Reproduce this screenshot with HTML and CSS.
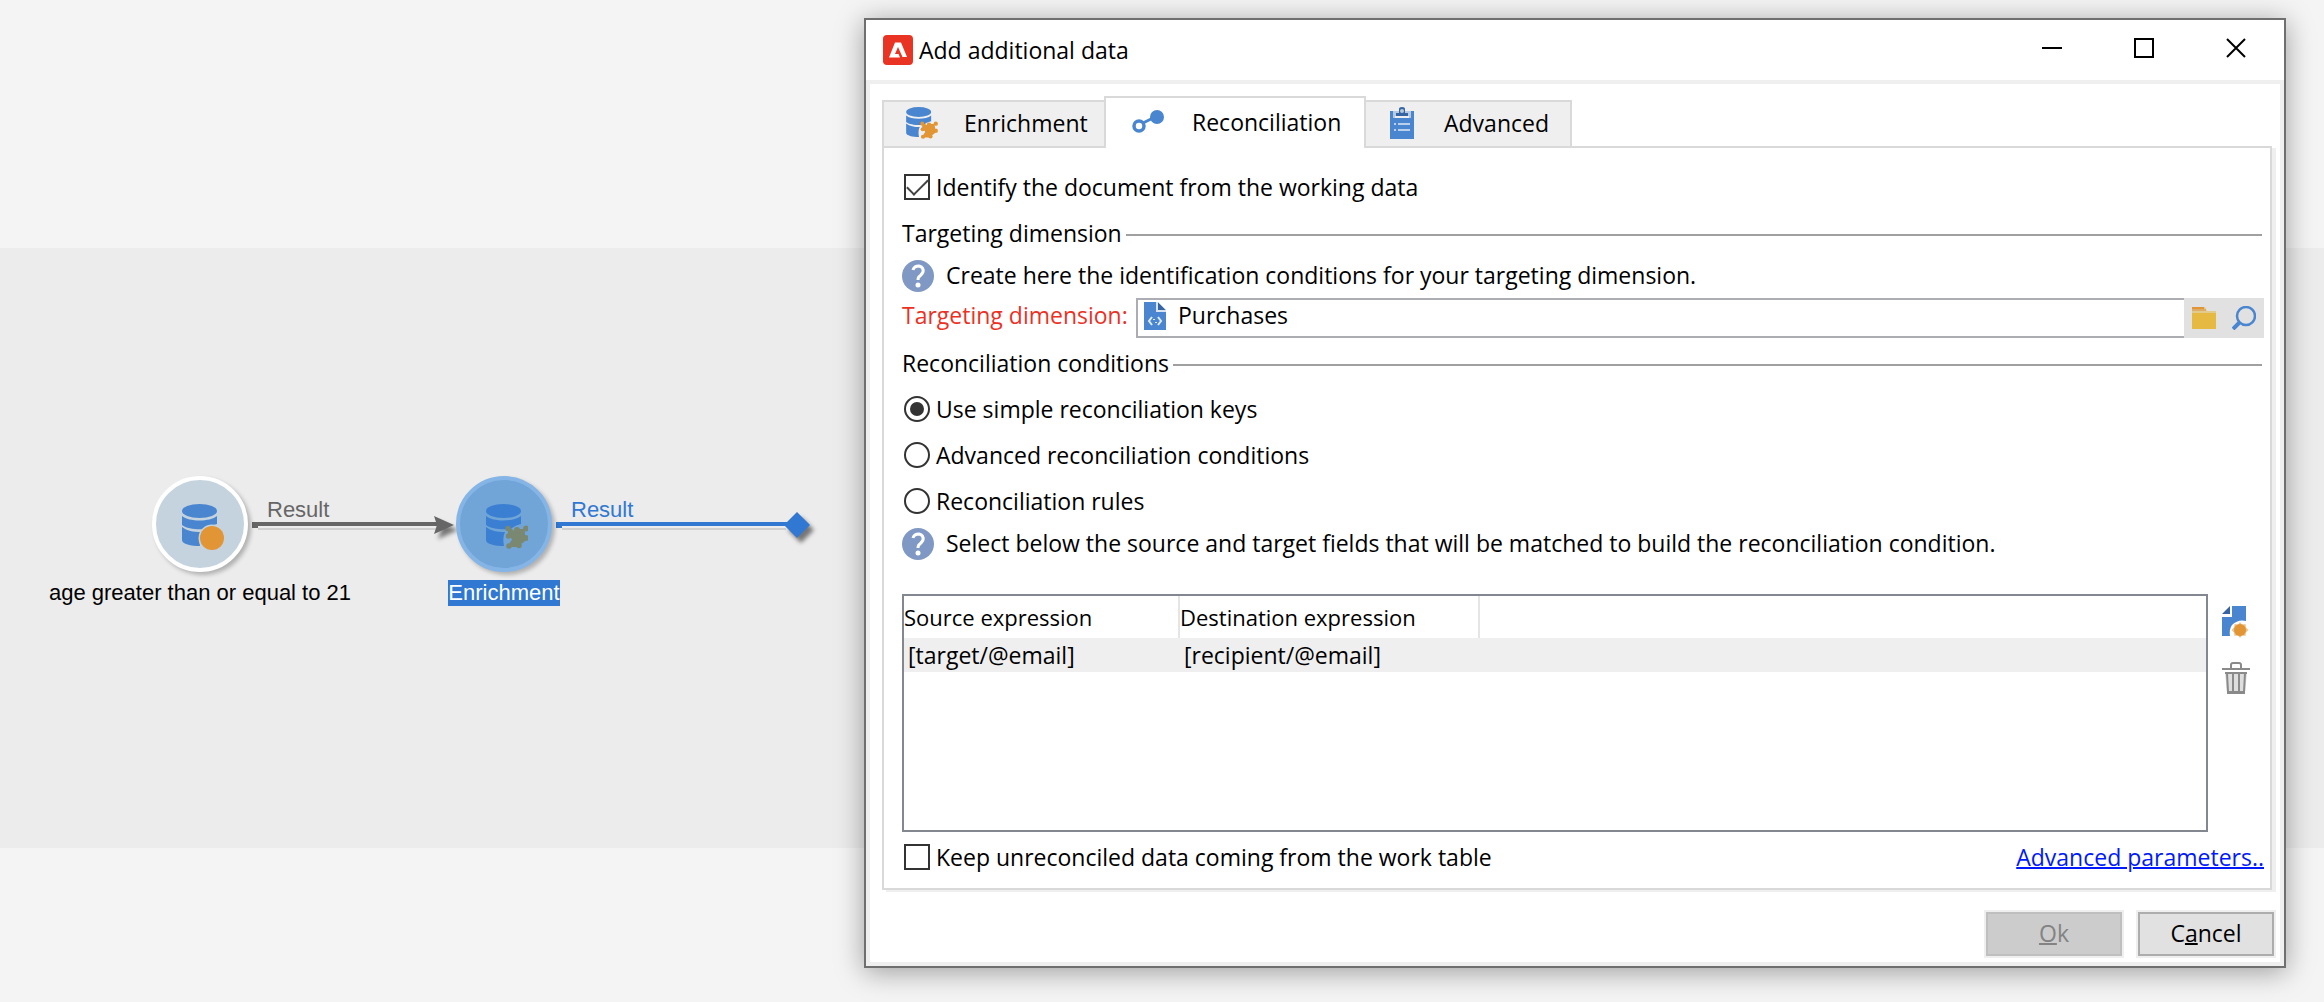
FILE: index.html
```html
<!DOCTYPE html>
<html lang="en">
<head>
<meta charset="utf-8">
<title>Add additional data</title>
<link rel="stylesheet" href="styles.css">
</head>
<body>
<svg class="defs" aria-hidden="true">
  <symbol id="database" viewBox="0 0 36 42">
    <ellipse cx="17.500" cy="7" rx="17.500" ry="7"/>
    <path d="M0 12c7 6 28 6 35 0v8c-5 1-8 3-10 5-9 1-20 0-25-4z"/>
    <path d="M0 23c5 4 11 5 19 5-2 4-2 9-1 14C9 42 0 40 0 36z"/>
  </symbol>
  <symbol id="puzzle" viewBox="0 0 24 24">
    <path d="M3 4h4q2 3 4 1l3-1h5l1 4v8q-2 2-4 3v3H4l1-5q3-2 1-4l-3-2z"/>
    <circle cx="3" cy="3.500" r="2.700"/><circle cx="3.500" cy="11" r="2.700"/><circle cx="12" cy="5" r="3"/><circle cx="21" cy="3.500" r="2.900"/><circle cx="21" cy="13" r="2.900"/><circle cx="4" cy="21" r="2.800"/><circle cx="14" cy="20.500" r="2.800"/>
  </symbol>
</svg>

<main class="workflow">
  <svg class="edges" viewBox="0 0 860 600" aria-hidden="true">
    <path d="M258 281H438" stroke="#d0d0d0" stroke-width="2"/>
    <path d="M252 274h186v4H258v2h-6z" fill="#666"/>
    <path class="raised" d="M434 268l20 9-20 9 3-9z" fill="#666"/>
    <path d="M562 281h224" stroke="#d0d0d0" stroke-width="2"/>
    <path d="M556 274h232v4H562v2h-6z" fill="#3078d1"/>
    <path class="raised" d="M797 264l13 13-13 13-13-13z" fill="#3078d1"/>
  </svg>
  <div class="node node-query">
    <span class="disc">
      <svg class="db" viewBox="0 0 42 46"><use href="#database" width="36" height="42"/><circle cx="30" cy="34" r="13.500" fill="#c5d3df"/><circle cx="30" cy="34" r="12" fill="#e19535"/></svg>
    </span>
    <span class="caption">age greater than or equal to 21</span>
  </div>
  <span class="edge-label label-query">Result</span>
  <div class="node node-enrichment">
    <span class="disc">
      <svg class="db" viewBox="0 0 42 46"><use href="#database" width="36" height="42"/><use href="#puzzle" class="piece" x="19" y="21" width="24" height="24"/></svg>
    </span>
    <span class="caption">Enrichment</span>
  </div>
  <span class="edge-label label-enrichment">Result</span>
</main>

<section class="dialog" role="dialog" aria-labelledby="dialog-title">
  <header class="titlebar">
    <svg class="app-icon" viewBox="0 0 30 30" aria-hidden="true"><rect width="30" height="30" rx="4" fill="#e93424"/><path d="M12 7.500h6L24 22h-4.500L15 12l-3 7h3.500l1.500 3.500H6z" fill="#fff"/></svg>
    <h1 id="dialog-title">Add additional data</h1>
    <div class="window-controls">
      <button type="button" aria-label="Minimize"><svg viewBox="0 0 20 20"><path d="M0 10h20"/></svg></button>
      <button type="button" aria-label="Maximize"><svg viewBox="0 0 20 20"><path d="M1 1h18v18H1z"/></svg></button>
      <button type="button" aria-label="Close"><svg viewBox="0 0 20 20"><path d="M1 1l18 18M19 1L1 19"/></svg></button>
    </div>
  </header>

  <div class="content">
    <div class="tabs" role="tablist">
      <button type="button" role="tab" class="tab tab-enrichment">
        <svg viewBox="0 0 32 32"><use href="#database" class="blue" width="26" height="30"/><use href="#puzzle" fill="#e19535" x="14" y="14" width="18" height="18"/></svg>
        Enrichment
      </button>
      <button type="button" role="tab" class="tab tab-reconciliation" aria-selected="true">
        <svg viewBox="0 0 32 32"><circle cx="7" cy="20" r="5" fill="none" stroke="#4a86cf" stroke-width="3.500"/><path d="M11 17l12-6" stroke="#4a86cf" stroke-width="3"/><circle cx="25" cy="11" r="7" class="blue"/></svg>
        Reconciliation
      </button>
      <button type="button" role="tab" class="tab tab-advanced">
        <svg viewBox="0 0 32 32"><path d="M0 4h24v28H0z" class="blue"/><path d="M3 4h18v7H3z" fill="#b7cadf"/><path d="M5 10h14" stroke="#efefef" stroke-width="2"/><path d="M6 9V6h3V2q0-2 3-2t3 2v4h3v3z" fill="#3566a3"/><circle cx="12" cy="4" r="2" fill="#b7cadf"/><path d="M4 17h2m2 0h12M4 23h2m2 0h12" stroke="#b9cfeb" stroke-width="2"/></svg>
        Advanced
      </button>
    </div>

    <div class="panel" role="tabpanel">
      <label class="option"><input type="checkbox" checked>Identify the document from the working data</label>

      <h2 class="group">Targeting dimension</h2>
      <p class="help"><svg viewBox="0 0 32 32" aria-hidden="true"><circle cx="16" cy="16" r="16" fill="#8099c4"/><path d="M11 10q1-4 6-4 5 1 4 6-1 2-3 4-2 1-2 4" fill="none" stroke="#fff" stroke-width="3"/><circle cx="16" cy="25" r="2.500" fill="#fff"/></svg><span>Create here the identification conditions for your targeting dimension.</span></p>

      <div class="field-row">
        <label for="dimension">Targeting dimension:</label>
        <div class="field">
          <svg viewBox="0 0 22 28" aria-hidden="true"><path d="M0 0h22v28H0z" class="blue"/><path d="M12 0h10v10H12z" fill="#d7e3f2"/><path d="M14 0l8 8h-8z" fill="#3566a3"/><path d="M22 0v8l-8-8z" fill="#fff"/><path d="M8 15l-3 4 3 4M14 15l3 4-3 4M10 17v1m2 2v1" fill="none" stroke="#dfeaf7" stroke-width="2"/></svg>
          <input type="text" id="dimension" value="Purchases">
        </div>
        <div class="tools">
          <button type="button" aria-label="Choose folder"><svg viewBox="0 0 24 24"><path d="M0 1h13l2 4h9v3H0z" fill="#e0cb8c"/><path d="M0 1h12v2H0z" fill="#e19535"/><path d="M0 3h14v2H0z" fill="#ddad68"/><path d="M0 7h24v16H0z" fill="#e5b942"/></svg></button>
          <button type="button" aria-label="Search"><svg viewBox="0 0 24 24"><circle cx="14" cy="10" r="9" fill="none" stroke="#4a86cf" stroke-width="2.500"/><path d="M8 16l-7 7" stroke="#4a86cf" stroke-width="4"/></svg></button>
        </div>
      </div>

      <h2 class="group group-conditions">Reconciliation conditions</h2>
      <div class="choices">
        <label class="option"><input type="radio" name="mode" checked>Use simple reconciliation keys</label>
        <label class="option"><input type="radio" name="mode">Advanced reconciliation conditions</label>
        <label class="option"><input type="radio" name="mode">Reconciliation rules</label>
      </div>
      <p class="help"><svg viewBox="0 0 32 32" aria-hidden="true"><circle cx="16" cy="16" r="16" fill="#8099c4"/><path d="M11 10q1-4 6-4 5 1 4 6-1 2-3 4-2 1-2 4" fill="none" stroke="#fff" stroke-width="3"/><circle cx="16" cy="25" r="2.500" fill="#fff"/></svg><span>Select below the source and target fields that will be matched to build the reconciliation condition.</span></p>

      <div class="keys">
        <div class="grid">
          <table>
            <thead><tr><th class="col-source">Source expression</th><th class="col-target">Destination expression</th><th></th></tr></thead>
            <tbody><tr><td>[target/@email]</td><td>[recipient/@email]</td><td></td></tr></tbody>
          </table>
        </div>
        <div class="grid-actions">
          <button type="button" aria-label="Add"><svg viewBox="0 0 28 32"><path d="M10 0h14v15q-8-2-14 4-3 4-2 11H0V11h10z" class="blue"/><path d="M0 8l8-8v8z" fill="#3566a3"/><path d="M18 16l2 2.500 3.500-.5.500 3.500 2.500 2.500-2.500 2.500-.5 3.500-3.500-.5-2 2.500-2-2.500-3.500.5-.5-3.500L9.500 24l2.500-2.500.5-3.500 3.500.5z" fill="#ecc68f"/><circle cx="18" cy="24" r="6" fill="#e19535"/></svg></button>
          <button type="button" aria-label="Delete"><svg viewBox="0 0 28 32"><path d="M3 11h22l-2 20H5z" fill="#dedede"/><path d="M9 6V3q0-2 2-2h6q2 0 2 2v3M0 7h28M3 11h22M5 11l1 19h16l1-19M11 12v18M17 12v18M5 31h18" fill="none" stroke="#8a8a8a" stroke-width="2"/></svg></button>
        </div>
      </div>

      <div class="panel-footer">
        <label class="option"><input type="checkbox">Keep unreconciled data coming from the work table</label>
        <a href="#">Advanced parameters..</a>
      </div>
    </div>

    <footer class="actions">
      <button type="button" disabled><span><u>O</u>k</span></button>
      <button type="button"><span>C<u>a</u>ncel</span></button>
    </footer>
  </div>
</section>
</body>
</html>
```
FILE: styles.css
```css
* { box-sizing: border-box; }

body {
  margin: 0;
  min-height: 100vh;
  padding: 248px 0 154px;
  background: #f4f4f4;
  color: #000;
  font: 23px/30px "Open Sans", "Noto Sans", sans-serif;
}

button, input { font: inherit; color: inherit; }
h1, h2, p { margin: 0; font: inherit; }
svg { display: block; }
.defs { position: absolute; width: 0; height: 0; }
.blue { fill: #4a86cf; }

/* Workflow canvas */
.workflow {
  position: relative;
  height: 600px;
  background: #ececec;
  font: 22px/26px "Liberation Sans", Arial, sans-serif;
}
.edges { position: absolute; left: 0; top: 0; width: 860px; height: 600px; }
.raised { filter: drop-shadow(4px 5px 2px rgba(0, 0, 0, .5)); }
.node {
  position: absolute;
  top: 228px;
  display: flex;
  flex-direction: column;
  align-items: center;
  gap: 8px;
  width: 304px;
}
.node-query { left: 48px; }
.node-enrichment { left: 352px; }
.disc {
  display: flex;
  align-items: center;
  justify-content: center;
  width: 96px;
  height: 96px;
  padding: 6px 0 0 6px;
  border: 4px solid #fff;
  border-radius: 50%;
  background: #c5d3df;
  box-shadow: 3px 3px 4px rgba(0, 0, 0, .25);
}
.node-enrichment .disc { border-color: #85b5e6; background: #71a5d7; }
.db { width: 42px; height: 46px; fill: #4a86cf; }
.node-enrichment .db { fill: #3a7fd1; }
.piece { fill: #7b8871; }
.caption { white-space: nowrap; }
.node-enrichment .caption { background: #3078d1; color: #fff; }
.edge-label { position: absolute; top: 249px; color: #666; }
.label-query { left: 267px; }
.label-enrichment { left: 571px; color: #3078d1; }

/* Dialog window */
.dialog {
  position: absolute;
  top: 18px;
  left: 864px;
  right: 38px;
  border: 2px solid #6f6f6f;
  background: #fff;
  box-shadow: 0 4px 26px rgba(0, 0, 0, .36);
}
.titlebar { display: flex; align-items: center; height: 60px; padding-left: 17px; }
.app-icon { width: 30px; height: 30px; }
.titlebar h1 { margin-left: 6px; }
.window-controls { display: flex; margin: 0 2px 4px auto; }
.window-controls button {
  display: grid;
  place-items: center;
  width: 92px;
  height: 56px;
  padding: 0;
  border: 0;
  background: none;
}
.window-controls svg { width: 20px; height: 20px; fill: none; stroke: #000; stroke-width: 2; }

.content { padding: 12px 4px 4px 12px; border: 4px solid #efefef; }

.tabs { position: relative; z-index: 1; display: flex; align-items: flex-end; }
.tab {
  display: flex;
  align-items: center;
  gap: 26px;
  height: 48px;
  padding: 0 0 2px 22px;
  border: 2px solid #d9d9d9;
  background: #efefef;
  white-space: nowrap;
}
.tab svg { flex: none; width: 32px; height: 32px; }
.tab-enrichment { width: 222px; border-right-width: 0; }
.tab-reconciliation {
  gap: 28px;
  width: 262px;
  height: 52px;
  padding-left: 26px;
  border-bottom: 0;
  background: #fff;
}
.tab-advanced { gap: 22px; width: 206px; padding-left: 24px; border-left-width: 0; }

.panel {
  margin: -2px 4px 0 0;
  padding: 16px 6px 16px 18px;
  border: 2px solid #d9d9d9;
  box-shadow: 4px 2px 0 #efefef;
}

.option { display: flex; align-items: center; gap: 6px; height: 46px; padding-left: 2px; }
.option input {
  appearance: none;
  display: grid;
  place-items: center;
  width: 26px;
  height: 26px;
  margin: 0;
  border: 2px solid #333;
  background: #fff;
}
.option input[type="radio"] { border-radius: 50%; }
.option input[type="radio"]:checked::before {
  content: "";
  width: 14px;
  height: 14px;
  border-radius: 50%;
  background: #333;
}
.option input[type="checkbox"]:checked::before {
  content: "";
  width: 19px;
  height: 9px;
  margin-bottom: 5px;
  border: solid #444;
  border-width: 0 0 2px 2px;
  transform: rotate(-45deg);
}

.group { display: flex; align-items: center; gap: 4px; height: 50px; margin-right: 2px; padding-bottom: 4px; }
.group::after { content: ""; flex: 1; height: 2px; margin-top: 4px; background: #a0a0a0; }
.group-conditions { margin-top: 2px; }

.help { display: flex; align-items: center; gap: 12px; }
.help svg { flex: none; width: 32px; height: 32px; }
.help span { padding-bottom: 2px; }

.field-row { display: flex; height: 40px; margin-top: 6px; }
.field-row label { width: 234px; padding-top: 2px; color: #ed3024; }
.field {
  display: flex;
  flex: 1;
  gap: 12px;
  padding: 2px 0 0 6px;
  border: 2px solid #abadb3;
  border-right: 0;
}
.field svg { width: 22px; height: 28px; }
.field input { flex: 1; min-width: 0; height: 26px; padding: 0; border: 0; background: none; outline: 0; }
.tools { display: flex; background: #e1e1e1; }
.tools button {
  display: grid;
  place-items: center;
  width: 40px;
  padding: 0;
  border: 0;
  background: none;
}
.tools svg { width: 24px; height: 24px; }

.choices { display: flex; flex-direction: column; gap: 8px; margin-bottom: 8px; }
.choices .option { height: 38px; }

.keys { display: flex; gap: 14px; margin-top: 34px; }
.grid { flex: 1; min-height: 238px; border: 2px solid #828790; }
.grid table { width: 100%; border-collapse: separate; border-spacing: 0; table-layout: fixed; }
.grid th {
  height: 42px;
  padding: 0;
  border-right: 2px solid #e5e5e5;
  font-size: 22px;
  font-weight: 400;
  text-align: left;
}
.grid th:last-child { border-right: 0; }
.grid td { height: 34px; padding: 0 4px; background: #efefef; }
.col-source { width: 276px; }
.col-target { width: 300px; }
.grid-actions { display: flex; flex-direction: column; gap: 24px; width: 42px; padding-top: 12px; }
.grid-actions button { padding: 0; border: 0; background: none; }
.grid-actions svg { width: 28px; height: 32px; }

.panel-footer { display: flex; align-items: center; justify-content: space-between; margin-top: 10px; }
.panel-footer .option { height: 30px; }
.panel-footer a { color: #0019ff; text-decoration-thickness: 2px; }

.actions { display: flex; justify-content: flex-end; gap: 16px; padding: 22px 2px 2px 0; }
.actions button {
  width: 136px;
  height: 44px;
  padding: 0 0 2px;
  border: 2px solid #adadad;
  outline: 2px solid #efefef;
  background: #e1e1e1;
}
.actions button:disabled { border-color: #bfbfbf; background: #ccc; color: #838383; }
.actions u { text-decoration-thickness: 2px; }
```
